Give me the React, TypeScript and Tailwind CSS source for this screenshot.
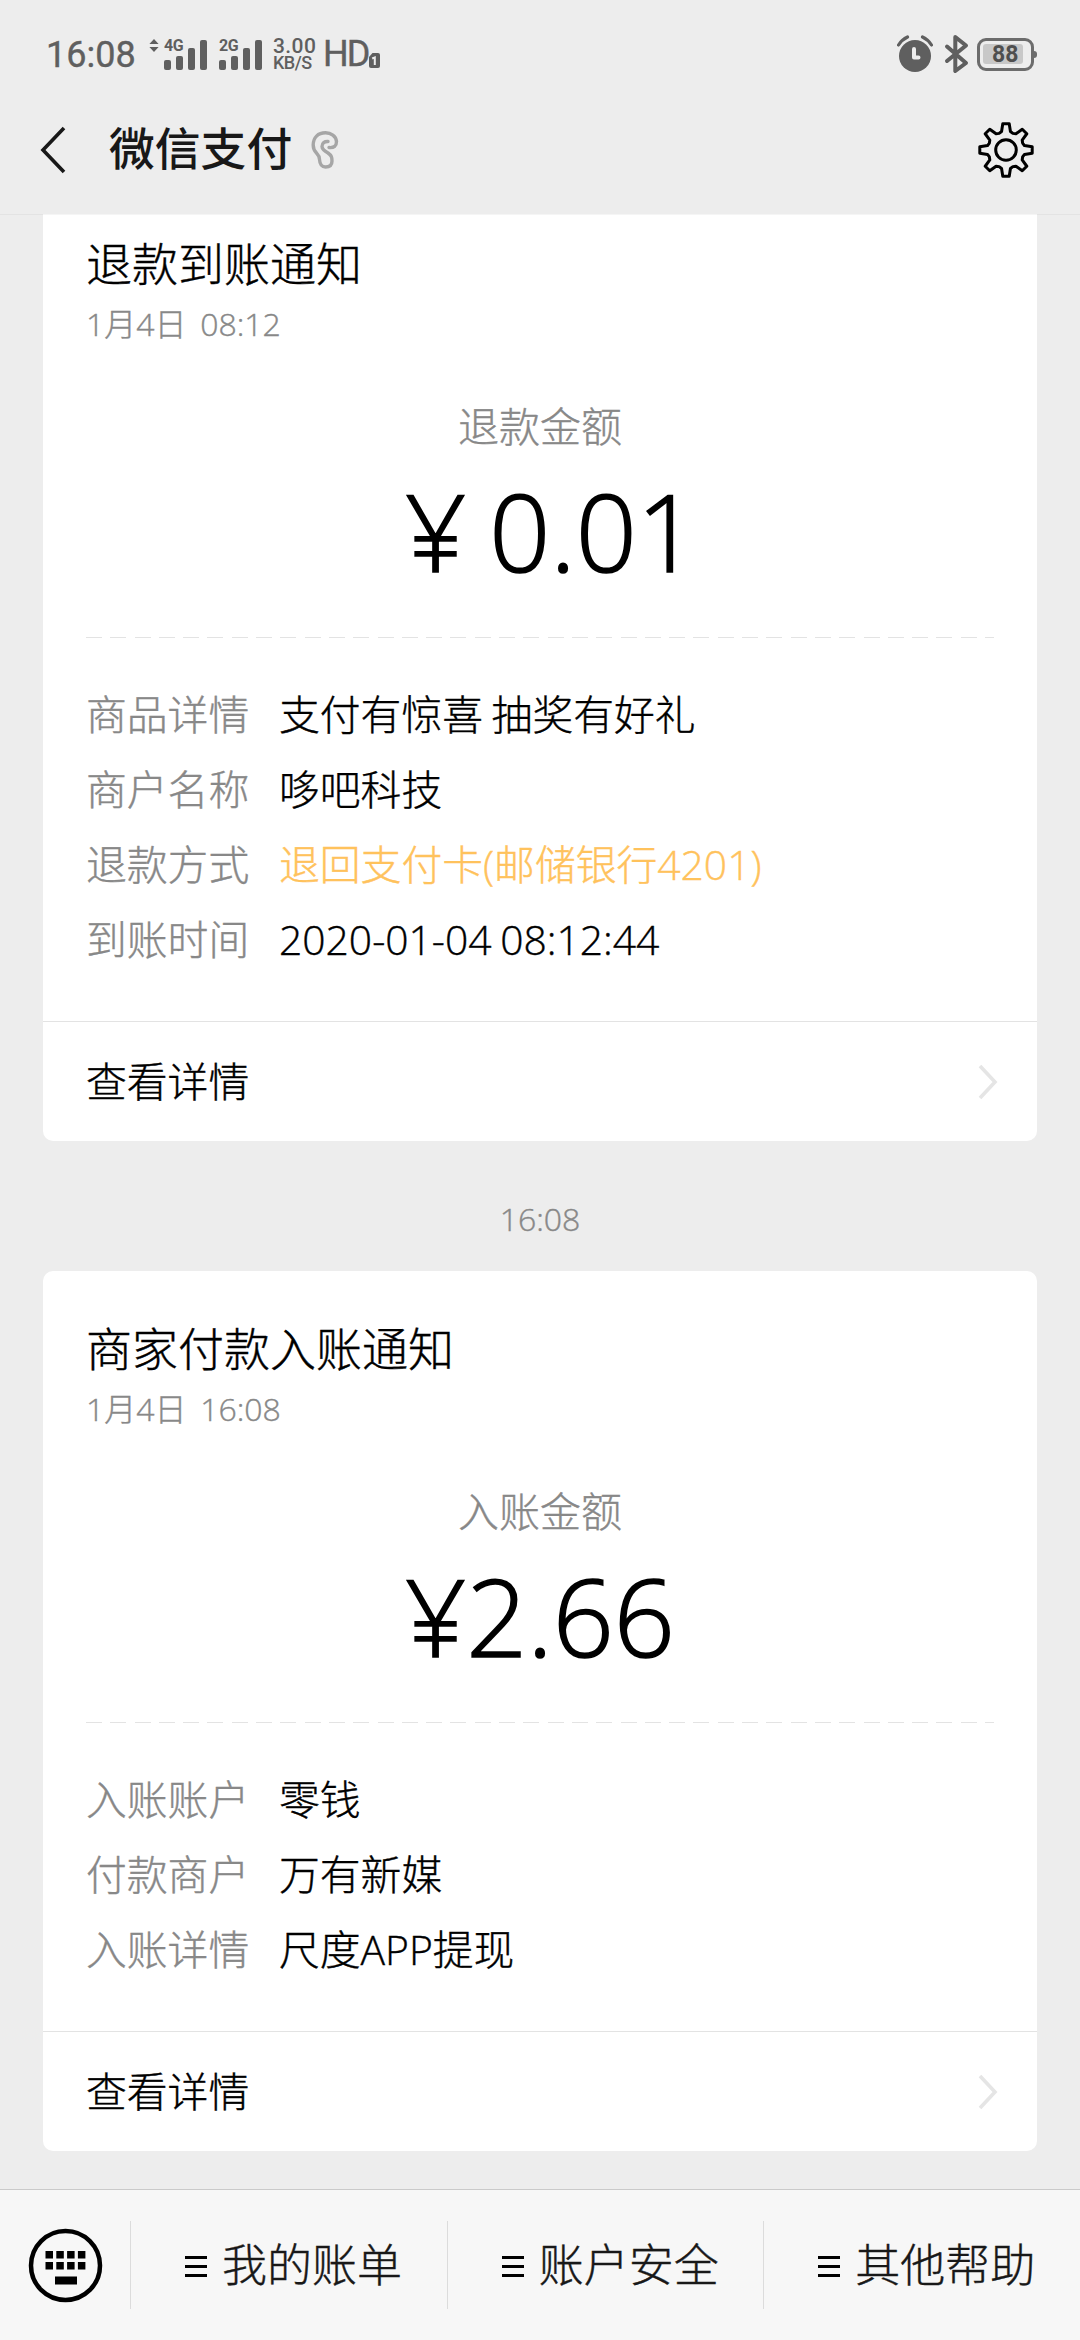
import React from "react";

type Row = { label: string; value: string; highlight?: boolean };

const refundRows: Row[] = [
  { label: "商品详情", value: "支付有惊喜 抽奖有好礼" },
  { label: "商户名称", value: "哆吧科技" },
  { label: "退款方式", value: "退回支付卡(邮储银行4201)", highlight: true },
  { label: "到账时间", value: "2020-01-04 08:12:44" },
];

const incomeRows: Row[] = [
  { label: "入账账户", value: "零钱" },
  { label: "付款商户", value: "万有新媒" },
  { label: "入账详情", value: "尺度APP提现" },
];

const SignalBars = ({ label }: { label: string }) => (
  <div className="relative h-[31px] w-[43px]">
    <span className="absolute left-0 top-0 text-[16px] leading-[13px] font-bold tracking-[-0.5px]">{label}</span>
    <div className="flex h-full items-end gap-[5px]">
      <div className="h-[10px] w-[7px] rounded-[2px] bg-[#5f5f5f]" />
      <div className="h-[14px] w-[7px] rounded-[2px] bg-[#5f5f5f]" />
      <div className="h-[22px] w-[7px] rounded-[2px] bg-[#5f5f5f]" />
      <div className="h-[30px] w-[7px] rounded-[2px] bg-[#5f5f5f]" />
    </div>
  </div>
);

const StatusBar = () => (
  <div className="flex h-[108px] items-center justify-between pl-[46px] pr-[46px] font-[Roboto,sans-serif] font-normal text-[#5f5f5f]">
    <div className="flex items-center">
      <span className="mt-[2px] w-[103px] text-[36px] leading-[40px] [-webkit-text-stroke:0.4px]">16:08</span>
      <svg className="mr-[5px] mb-[18px]" width="10" height="13" viewBox="0 0 10 13" fill="#5f5f5f">
        <path d="M5 0L9.6 5H.4zM5 13L.4 8h9.2z" />
      </svg>
      <SignalBars label="4G" />
      <div className="w-3" />
      <SignalBars label="2G" />
      <div className="ml-[11px] flex w-[50px] flex-col font-medium">
        <span className="text-[21px] leading-[17px] tracking-[0.4px]">3.00</span>
        <span className="text-[18px] leading-[15px] tracking-[-0.5px]">KB/S</span>
      </div>
      <span className="text-[36px] leading-[40px] tracking-[-2px] [-webkit-text-stroke:0.4px]">HD</span>
      <svg className="ml-[1px] mt-[12px]" width="11" height="15" viewBox="0 0 11 15">
        <path d="M3.5 0H9a2 2 0 0 1 2 2v11a2 2 0 0 1-2 2H2a2 2 0 0 1-2-2V4z" fill="#5f5f5f" />
        <path d="M3.2 5.5L5.8 4.4V12" fill="none" stroke="#ededed" strokeWidth="2" />
      </svg>
    </div>
    <div className="flex items-center">
      <svg width="36" height="38" viewBox="0 0 36 38">
        <circle cx="18" cy="21" r="16" fill="#5f5f5f" />
        <path d="M1.5 10Q5 4.500 10.500 2M34.500 10Q31 4.500 25.500 2" fill="none" stroke="#5f5f5f" strokeWidth="3.200" strokeLinecap="round" />
        <path d="M17 14v8.500h4.500" fill="none" stroke="#ededed" strokeWidth="4" strokeLinecap="round" strokeLinejoin="round" />
      </svg>
      <svg className="ml-[11px]" width="25" height="40" viewBox="0 0 25 40" fill="none" stroke="#5f5f5f" strokeWidth="4" strokeLinecap="round" strokeLinejoin="round">
        <path d="M3 12.500L22 29 11.300 37V3L22 11.500 3 27" />
      </svg>
      <div className="relative ml-[8px] flex h-[33px] w-[57px] items-center rounded-[9px] border-[3px] border-[#6c6c6c] pl-[3px]">
        <div className="h-[20px] w-[40px] rounded-[3px] bg-[#c8c8c8]" />
        <span className="absolute left-[12px] top-[3px] text-[23px] leading-[22px] font-bold text-[#4f4f4f]">88</span>
        <div className="absolute -right-[6px] top-[10px] h-[7px] w-[3px] rounded-r-full bg-[#6c6c6c]" />
      </div>
    </div>
  </div>
);

const toothPath = Array.from({ length: 8 }, (_, i) => {
  const point = (radius: number, degrees: number) => {
    const a = ((i * 45 + degrees - 90) * Math.PI) / 180;
    return `${(28 + radius * Math.cos(a)).toFixed(2)} ${(28 + radius * Math.sin(a)).toFixed(2)}`;
  };
  return `${i ? "L" : "M"}${point(19, -13.5)}L${point(26.4, -7)}L${point(26.4, 7)}L${point(19, 13.5)}L${point(18, 22.5)}`;
}).join("");

const Header = () => (
  <div className="flex h-[106px] items-center pl-[40px] pr-[46px] pb-[23px]">
    <svg width="26" height="48" viewBox="0 0 26 48" fill="none" stroke="#181818" strokeWidth="3.600">
      <path d="M24 2L3 24l21 22" />
    </svg>
    <h1 className="ml-[43px] mb-[3px] text-[45.800px] leading-[64px] font-medium text-[#181818]">微信支付</h1>
    <svg className="ml-[19px]" width="28" height="38" viewBox="0 0 28 38" fill="none" stroke="#a6a6a6" strokeWidth="3.400" strokeLinecap="round">
      <path d="M18 16.500C23 17 25.500 15 25.500 10.500C25 5 20 1.800 14.500 1.800C7 1.800 2.200 6.500 2.200 14C2.200 23 8.500 21.500 8.500 28.500C8.800 33 10.500 36 14.500 36C19 36 21 33.500 21 30C21 26 20.500 24.500 17 22C13.500 20 11 18.500 11 15.500C11 12 13.500 10.300 17 10.500" />
    </svg>
    <svg className="ml-auto" width="56" height="56" viewBox="0 0 56 56" fill="none" stroke="#000" strokeWidth="3" strokeLinejoin="round">
      <path d={`${toothPath}Z`} />
      <circle cx="28" cy="28" r="10.300" />
    </svg>
  </div>
);

type CardProps = { title: string; date: string; amountLabel: string; amount: string; wideSign?: boolean; rows: Row[] };

const Card = ({ title, date, amountLabel, amount, wideSign, rows }: CardProps) => (
  <div className="mx-[43px] flex flex-col rounded-[10px] bg-white">
    <div className="flex flex-col px-[43px] pt-[44px] pb-[46px]">
      <h2 className="text-[46px] leading-[66px] text-black">{title}</h2>
      <p className="mt-1 whitespace-pre text-[32px] leading-[48px] [word-spacing:-1.5px] text-[#888]">{date}</p>
      <p className="mt-12 text-center text-[41px] leading-[60px] text-[#888]">{amountLabel}</p>
      <p className="mt-[5px] flex justify-center text-[107px] leading-[140px] text-black [-webkit-text-stroke:1.6px]">
        <span className={wideSign ? "w-[107px] text-center" : ""}>¥</span>
        <span>{amount}</span>
      </p>
      <div className="mt-[36px] h-px bg-[repeating-linear-gradient(to_right,#e3e3e3_0_16px,transparent_16px_24.300px)]" />
      <div className="mt-[39px] mb-[-2px] flex flex-col">
        {rows.map((row) => (
          <div className="flex h-[75px] items-center text-[40.800px] [word-spacing:-2px]" key={row.label}>
            <span className="w-[193px] text-[#888]">{row.label}</span>
            <span className={row.highlight ? "text-[#ffc25c]" : "text-black"}>{row.value}</span>
          </div>
        ))}
      </div>
    </div>
    <div className="flex h-[120px] items-center justify-between border-t border-[#e3e3e3] pl-[43px] pr-[39px]">
      <span className="text-[40.800px] text-black">查看详情</span>
      <svg width="20" height="38" viewBox="0 0 20 38" fill="none" stroke="#e5e5e5" strokeWidth="3.600">
        <path d="M2 3l15 16L2 35" />
      </svg>
    </div>
  </div>
);

const keyColumns = [19, 29.8, 40.6, 51.4];

const BottomBar = () => (
  <div className="flex h-[151px] items-center border-t border-[#cacaca] bg-[#f7f7f7]">
    <div className="flex w-[130px] items-center pl-[27px]">
      <svg width="77" height="77" viewBox="0 0 77 77">
        <circle cx="38.500" cy="38.500" r="34.500" fill="none" stroke="#000" strokeWidth="4.500" />
        {keyColumns.map((x) => (
          <g key={x}>
            <rect x={x - 0.5} y="24" width="7.500" height="7.500" />
            <rect x={x - 0.5} y="35" width="7.500" height="7.500" />
          </g>
        ))}
        <rect x="28" y="49.500" width="22" height="8" />
      </svg>
    </div>
    {["我的账单", "账户安全", "其他帮助"].map((item) => (
      <div className="flex h-[88px] flex-1 items-center border-l border-[#dcdcdc] pl-[54px]" key={item}>
        <div className="mt-[2px] flex flex-col gap-[6px]">
          <div className="h-[3px] w-[22px] bg-black" />
          <div className="h-[3px] w-[22px] bg-black" />
          <div className="h-[3px] w-[22px] bg-black" />
        </div>
        <span className="ml-[15px] whitespace-nowrap text-[45px] leading-[64px] text-[#181818]">{item}</span>
      </div>
    ))}
  </div>
);

const App = () => {
  return (
    <div className="flex h-[2340px] w-[1080px] flex-col overflow-hidden bg-[#ededed] font-['Open_Sans','Noto_Sans_CJK_SC',sans-serif] font-light">
      <div className="z-10 flex h-[215px] shrink-0 flex-col border-b border-black/4 bg-[#ededed] bg-clip-padding">
        <StatusBar />
        <Header />
      </div>
      <div className="-mt-[29px] flex flex-1 flex-col [-webkit-text-stroke:0.4px]">
        <Card title="退款到账通知" date="1月4日  08:12" amountLabel="退款金额" amount="0.01" wideSign rows={refundRows} />
        <p className="flex h-[130px] items-center justify-center pt-[25px] text-[32px] text-[#888]">16:08</p>
        <Card title="商家付款入账通知" date="1月4日  16:08" amountLabel="入账金额" amount="2.66" rows={incomeRows} />
      </div>
      <div className="[-webkit-text-stroke:0.4px]">
        <BottomBar />
      </div>
    </div>
  );
};

export default App;
